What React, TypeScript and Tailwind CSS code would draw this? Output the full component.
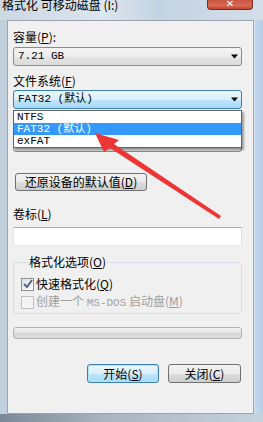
import React from 'react';

const cjk = { fontFamily: '"Noto Sans CJK SC", "Noto Sans", sans-serif' };
const mono = { fontFamily: '"Liberation Mono", "Noto Sans CJK SC", monospace' };

function Arrow() {
  return (
    <svg className="h-[7px] w-[7px]" viewBox="0 0 7 4">
      <path d="M0 0h7L3.5 4z" fill="#000" />
    </svg>
  );
}

function Combo({ text, hot }: { text: string; hot?: boolean }) {
  return (
    <div
      className={
        'flex h-[19px] items-center justify-between rounded-[3px] border pl-[4px] pr-[3px] text-[11px] leading-none text-black ' +
        (hot
          ? 'border-[#3c7fb1] bg-[linear-gradient(#eaf6fd_0%,#d9f0fc_50%,#bee6fd_51%,#a7d9f5_100%)]'
          : 'border-[#8a8a8a] bg-[linear-gradient(#f4f4f4_0%,#ececec_50%,#e4e4e4_51%,#dcdcdc_100%)]')
      }
      style={mono}
    >
      <span>{text}</span>
      <Arrow />
    </div>
  );
}

function Label({ children }: { children: React.ReactNode }) {
  return (
    <div className="text-[12px] leading-[14px] text-black" style={cjk}>
      {children}
    </div>
  );
}

function Check({ checked, disabled }: { checked?: boolean; disabled?: boolean }) {
  return (
    <div
      className={
        'flex h-[13px] w-[13px] items-center justify-center border ' +
        (disabled
          ? 'border-[#c2c2c2] bg-[#f4f4f4]'
          : 'border-[#8e8f8f] bg-[linear-gradient(135deg,#e0e0e0,#ffffff)]')
      }
    >
      {checked && (
        <svg width="10" height="10" viewBox="0 0 10 10">
          <path d="M1 5l3 3 5-7" stroke="#4a5f97" strokeWidth="2" fill="none" />
        </svg>
      )}
    </div>
  );
}

export default function App() {
  return (
    <div className="relative flex h-[422px] w-[263px] flex-col overflow-hidden bg-[linear-gradient(90deg,#c2cfdc,#c9d6e2_50%,#bfd3e8)]">
      {/* title bar */}
      <div className="relative h-[20px] bg-[linear-gradient(90deg,#cdd8e3,#dde5ed_40%,#c4d3e2_60%,#d3dee9)]">
        <div className="absolute top-[-2px] left-[2px] text-[12px] leading-[14px] text-black" style={cjk}>
          格式化 可移动磁盘 (I:)
        </div>
        <div className="absolute top-0 left-[207px] flex h-[10px] w-[46px] items-end justify-center rounded-b-[4px] border border-t-0 border-[#7a2a20] bg-[linear-gradient(#c8553f,#d96b55_60%,#c24632)]">
          <span className="mb-[1px] text-[10px] leading-[8px] font-bold text-white" style={{ fontFamily: '"DejaVu Sans", sans-serif' }}>
            ✕
          </span>
        </div>
      </div>

      <div className="flex flex-1">
        <div className="w-[7px]" />
        {/* client area */}
        <div className="relative flex h-[394px] w-[247px] flex-col border border-[#9aa5b1] bg-[#f0f0f0] pr-[11px] pl-[5px]">
          <div className="mt-[9px]">
            <Label>
              容量(<u>P</u>):
            </Label>
          </div>
          <div className="mt-[3px]">
            <Combo text="7.21 GB" />
          </div>
          <div className="mt-[8px]">
            <Label>
              文件系统(<u>F</u>)
            </Label>
          </div>
          <div className="mt-[2px]">
            <Combo text="FAT32 (默认)" hot />
          </div>
          <div className="mt-[5px]">
            <Label>
              分配单元大小(<u>A</u>)
            </Label>
          </div>
          <div className="mt-[5px]">
            <Combo text="4096 字节" />
          </div>

          {/* open dropdown list */}
          <div
            className="absolute top-[89px] left-[5px] w-[229px] border border-[#646464] bg-white py-0 text-[11px] leading-[12px] text-black shadow-[2px_2px_2px_rgba(0,0,0,0.35)]"
            style={mono}
          >
            <div className="h-[12px] pl-[3px]">NTFS</div>
            <div className="h-[12px] bg-[#3399ff] pl-[3px] text-white">FAT32 (默认)</div>
            <div className="h-[12px] pl-[3px]">exFAT</div>
          </div>

          <div className="mt-[21px] ml-[2px]">
            <button
              className="flex h-[18px] w-[132px] items-center justify-center rounded-[3px] border border-[#707070] bg-[linear-gradient(#f2f2f2_0%,#ebebeb_50%,#dddddd_51%,#cfcfcf_100%)] text-[12px] leading-none text-black"
              style={cjk}
            >
              还原设备的默认值(<u>D</u>)
            </button>
          </div>

          <div className="mt-[16px]">
            <Label>
              卷标(<u>L</u>)
            </Label>
          </div>
          <div className="mt-[6px] h-[19px] border border-[#abadb3] border-r-[#dbdfe6] border-b-[#e3e9ef] border-l-[#e2e3ea] bg-white" />

          <fieldset className="mt-[9px] rounded-[3px] border border-[#d5dfe5] pb-[4px] pl-[7px]">
            <legend className="ml-[7px] px-[1px] text-[12px] leading-[14px] text-black" style={cjk}>
              格式化选项(<u>O</u>)
            </legend>
            <div className="mt-[8px] flex h-[14px] items-center gap-[2px]">
              <Check checked />
              <span className="text-[12px] leading-[14px] text-black" style={cjk}>
                快速格式化(<u>Q</u>)
              </span>
            </div>
            <div className="mt-[4px] flex h-[14px] items-center gap-[2px]">
              <Check disabled />
              <span className="text-[12px] leading-[14px] text-[#a0a0a0]" style={cjk}>
                创建一个 <span style={mono} className="text-[11px]">MS-DOS</span> 启动盘(<u>M</u>)
              </span>
            </div>
          </fieldset>

          <div className="mt-[13px] h-[12px] rounded-[3px] border border-[#b2b2b2] bg-[linear-gradient(#f3f3f3,#e2e2e2_50%,#d4d4d4_51%,#dedede)]" />

          <div className="mt-[25px] mr-[1px] flex justify-end gap-[9px]">
            <button
              className="flex h-[19px] w-[72px] items-center justify-center rounded-[3px] border border-[#3c7fb1] bg-[linear-gradient(#eaf6fd_0%,#d9f0fc_50%,#bee6fd_51%,#a7d9f5_100%)] text-[12px] leading-none text-black shadow-[inset_0_0_0_1px_#aee4f8]"
              style={cjk}
            >
              开始(<u>S</u>)
            </button>
            <button
              className="flex h-[19px] w-[73px] items-center justify-center rounded-[3px] border border-[#707070] bg-[linear-gradient(#f2f2f2_0%,#ebebeb_50%,#dddddd_51%,#cfcfcf_100%)] text-[12px] leading-none text-black"
              style={cjk}
            >
              关闭(<u>C</u>)
            </button>
          </div>
        </div>
        <div className="flex-1 border-l border-[#d6e4f2] bg-[linear-gradient(90deg,#c4d8ec,#b6cde6)]" />
      </div>
      <div className="h-[8px] bg-[linear-gradient(90deg,#7d8896,#a9b4c0_40%,#c6d2de)]" />

      {/* red arrow annotation */}
      <svg className="pointer-events-none absolute top-0 left-0" width="263" height="422">
        <polygon
          points="95,133 119,140 114,144 221,216 219,219 110,148 104,152"
          fill="#ee3535"
        />
      </svg>
    </div>
  );
}
